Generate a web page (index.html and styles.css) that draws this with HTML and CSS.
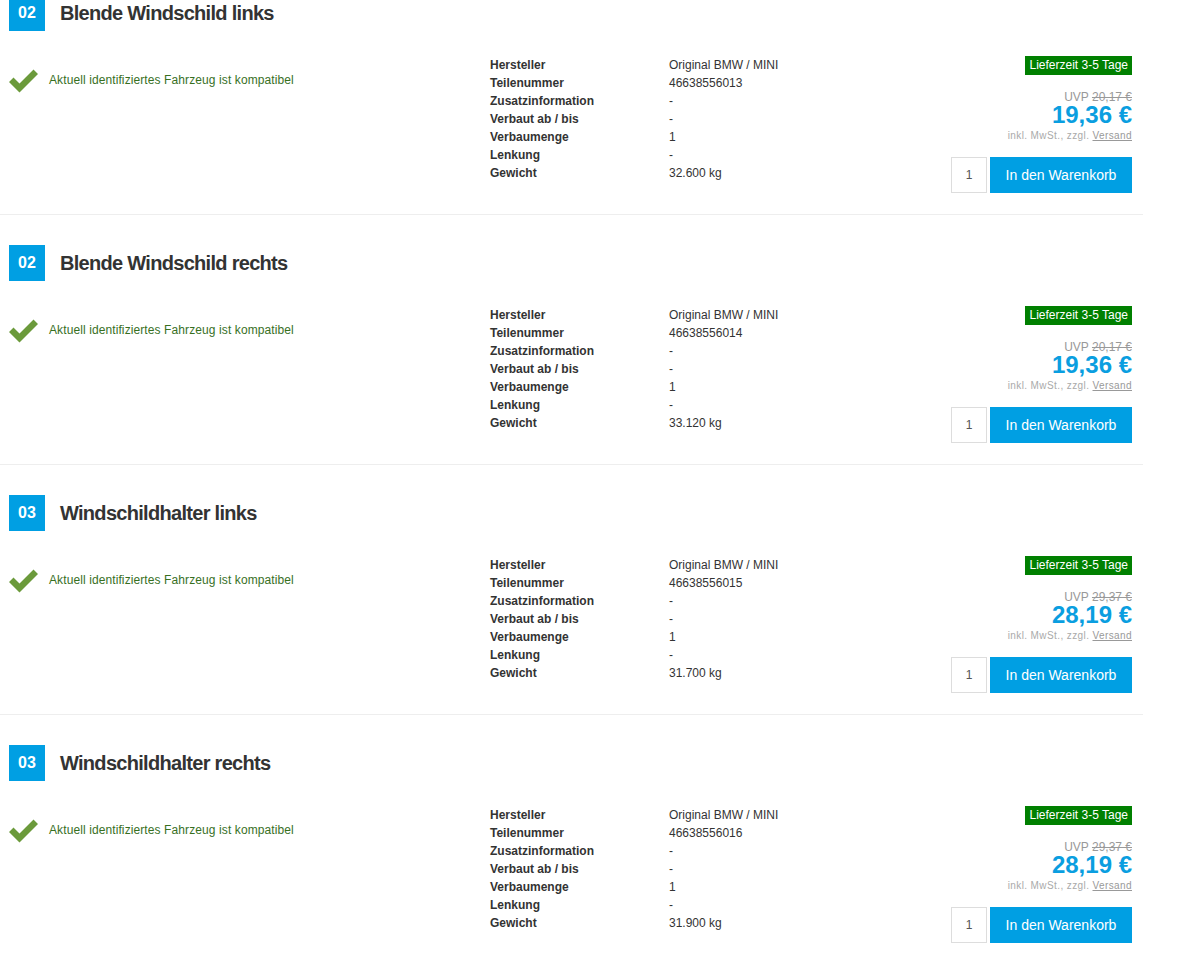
FILE: index.html
```html
<!DOCTYPE html>
<html lang="de">
<head>
    <meta charset="UTF-8">
    <title>Teileliste</title>
    <link rel="stylesheet" href="styles.css">
</head>
<body>
    <div class="part-list">

        <div class="part">
            <div class="part-head">
                <span class="pos">02</span>
                <h2>Blende Windschild links</h2>
            </div>
            <div class="part-body">
                <div class="compat">
                    <svg class="check" width="29" height="25" viewBox="0 0 29 25"><path d="M0 14 L4.5 9.5 L10.5 15.5 L24.5 1.5 L29 6 L10.5 24.5 Z" fill="#6b9a3b"/></svg>
                    <span>Aktuell identifiziertes Fahrzeug ist kompatibel</span>
                </div>
                <table class="details">
                    <tr><th>Hersteller</th><td>Original BMW / MINI</td></tr>
                    <tr><th>Teilenummer</th><td>46638556013</td></tr>
                    <tr><th>Zusatzinformation</th><td>-</td></tr>
                    <tr><th>Verbaut ab / bis</th><td>-</td></tr>
                    <tr><th>Verbaumenge</th><td>1</td></tr>
                    <tr><th>Lenkung</th><td>-</td></tr>
                    <tr><th>Gewicht</th><td>32.600 kg</td></tr>
                </table>
                <div class="buy">
                    <span class="delivery">Lieferzeit 3-5 Tage</span>
                    <div class="uvp">UVP <s>20,17 €</s></div>
                    <div class="price">19,36 €</div>
                    <div class="tax">inkl. MwSt., zzgl. <a href="#">Versand</a></div>
                    <form class="cart">
                        <input type="text" value="1">
                        <button type="button">In den Warenkorb</button>
                    </form>
                </div>
            </div>
        </div>

        <div class="part">
            <div class="part-head">
                <span class="pos">02</span>
                <h2>Blende Windschild rechts</h2>
            </div>
            <div class="part-body">
                <div class="compat">
                    <svg class="check" width="29" height="25" viewBox="0 0 29 25"><path d="M0 14 L4.5 9.5 L10.5 15.5 L24.5 1.5 L29 6 L10.5 24.5 Z" fill="#6b9a3b"/></svg>
                    <span>Aktuell identifiziertes Fahrzeug ist kompatibel</span>
                </div>
                <table class="details">
                    <tr><th>Hersteller</th><td>Original BMW / MINI</td></tr>
                    <tr><th>Teilenummer</th><td>46638556014</td></tr>
                    <tr><th>Zusatzinformation</th><td>-</td></tr>
                    <tr><th>Verbaut ab / bis</th><td>-</td></tr>
                    <tr><th>Verbaumenge</th><td>1</td></tr>
                    <tr><th>Lenkung</th><td>-</td></tr>
                    <tr><th>Gewicht</th><td>33.120 kg</td></tr>
                </table>
                <div class="buy">
                    <span class="delivery">Lieferzeit 3-5 Tage</span>
                    <div class="uvp">UVP <s>20,17 €</s></div>
                    <div class="price">19,36 €</div>
                    <div class="tax">inkl. MwSt., zzgl. <a href="#">Versand</a></div>
                    <form class="cart">
                        <input type="text" value="1">
                        <button type="button">In den Warenkorb</button>
                    </form>
                </div>
            </div>
        </div>

        <div class="part">
            <div class="part-head">
                <span class="pos">03</span>
                <h2>Windschildhalter links</h2>
            </div>
            <div class="part-body">
                <div class="compat">
                    <svg class="check" width="29" height="25" viewBox="0 0 29 25"><path d="M0 14 L4.5 9.5 L10.5 15.5 L24.5 1.5 L29 6 L10.5 24.5 Z" fill="#6b9a3b"/></svg>
                    <span>Aktuell identifiziertes Fahrzeug ist kompatibel</span>
                </div>
                <table class="details">
                    <tr><th>Hersteller</th><td>Original BMW / MINI</td></tr>
                    <tr><th>Teilenummer</th><td>46638556015</td></tr>
                    <tr><th>Zusatzinformation</th><td>-</td></tr>
                    <tr><th>Verbaut ab / bis</th><td>-</td></tr>
                    <tr><th>Verbaumenge</th><td>1</td></tr>
                    <tr><th>Lenkung</th><td>-</td></tr>
                    <tr><th>Gewicht</th><td>31.700 kg</td></tr>
                </table>
                <div class="buy">
                    <span class="delivery">Lieferzeit 3-5 Tage</span>
                    <div class="uvp">UVP <s>29,37 €</s></div>
                    <div class="price">28,19 €</div>
                    <div class="tax">inkl. MwSt., zzgl. <a href="#">Versand</a></div>
                    <form class="cart">
                        <input type="text" value="1">
                        <button type="button">In den Warenkorb</button>
                    </form>
                </div>
            </div>
        </div>

        <div class="part">
            <div class="part-head">
                <span class="pos">03</span>
                <h2>Windschildhalter rechts</h2>
            </div>
            <div class="part-body">
                <div class="compat">
                    <svg class="check" width="29" height="25" viewBox="0 0 29 25"><path d="M0 14 L4.5 9.5 L10.5 15.5 L24.5 1.5 L29 6 L10.5 24.5 Z" fill="#6b9a3b"/></svg>
                    <span>Aktuell identifiziertes Fahrzeug ist kompatibel</span>
                </div>
                <table class="details">
                    <tr><th>Hersteller</th><td>Original BMW / MINI</td></tr>
                    <tr><th>Teilenummer</th><td>46638556016</td></tr>
                    <tr><th>Zusatzinformation</th><td>-</td></tr>
                    <tr><th>Verbaut ab / bis</th><td>-</td></tr>
                    <tr><th>Verbaumenge</th><td>1</td></tr>
                    <tr><th>Lenkung</th><td>-</td></tr>
                    <tr><th>Gewicht</th><td>31.900 kg</td></tr>
                </table>
                <div class="buy">
                    <span class="delivery">Lieferzeit 3-5 Tage</span>
                    <div class="uvp">UVP <s>29,37 €</s></div>
                    <div class="price">28,19 €</div>
                    <div class="tax">inkl. MwSt., zzgl. <a href="#">Versand</a></div>
                    <form class="cart">
                        <input type="text" value="1">
                        <button type="button">In den Warenkorb</button>
                    </form>
                </div>
            </div>
        </div>

    </div>
</body>
</html>
```

FILE: styles.css
```css
body { margin: 0; font-family: "Liberation Sans", Arial, sans-serif; color: #333; background: #fff; }
.part-list { width: 1143px; margin-top: -35px; }
.part { padding: 30px 11px 20px 9px; border-bottom: 1px solid #eee; }
.part-head { display: flex; align-items: center; height: 36px; }
.pos { width: 36px; height: 36px; line-height: 36px; text-align: center; background: #009fe3; color: #fff; font-weight: bold; font-size: 16px; }
.part-head h2 { margin: 0 0 0 15px; font-size: 20px; font-weight: bold; color: #333; letter-spacing: -0.7px; }
.part-body { display: flex; margin-top: 25px; height: 138px; }
.compat { width: 481px; display: flex; align-items: flex-start; padding-top: 12px; }
.compat .check { flex: none; }
.compat span { margin: 5px 0 0 11px; font-size: 12px; letter-spacing: 0.1px; color: #38701f; }
.details { border-collapse: collapse; font-size: 12px; align-self: flex-start; }
.details th, .details td { padding: 0; height: 18px; line-height: 18px; text-align: left; }
.details th { width: 179px; font-weight: bold; color: #333; }
.details td { color: #333; }
.buy { margin-left: auto; display: flex; flex-direction: column; align-items: flex-end; }
.delivery { background: #008000; color: #fff; font-size: 12px; line-height: 19px; padding: 0 4px; }
.uvp { margin-top: 16px; font-size: 12px; line-height: 12px; color: #999; }
.uvp s { color: #999; }
.price { font-size: 24px; font-weight: bold; line-height: 24px; color: #0a9ee0; }
.tax { margin-top: 3px; font-size: 10px; line-height: 12px; letter-spacing: 0.4px; color: #aaa; }
.tax a { color: #999; }
.cart { display: flex; margin-top: 15px; }
.cart input { width: 36px; height: 36px; box-sizing: border-box; border: 1px solid #ddd; text-align: center; font-family: inherit; font-size: 12px; color: #555; padding: 0; margin-right: 3px; }
.cart button { width: 142px; height: 36px; border: none; background: #009fe3; color: #fff; font-family: inherit; font-size: 14px; cursor: pointer; }
```
